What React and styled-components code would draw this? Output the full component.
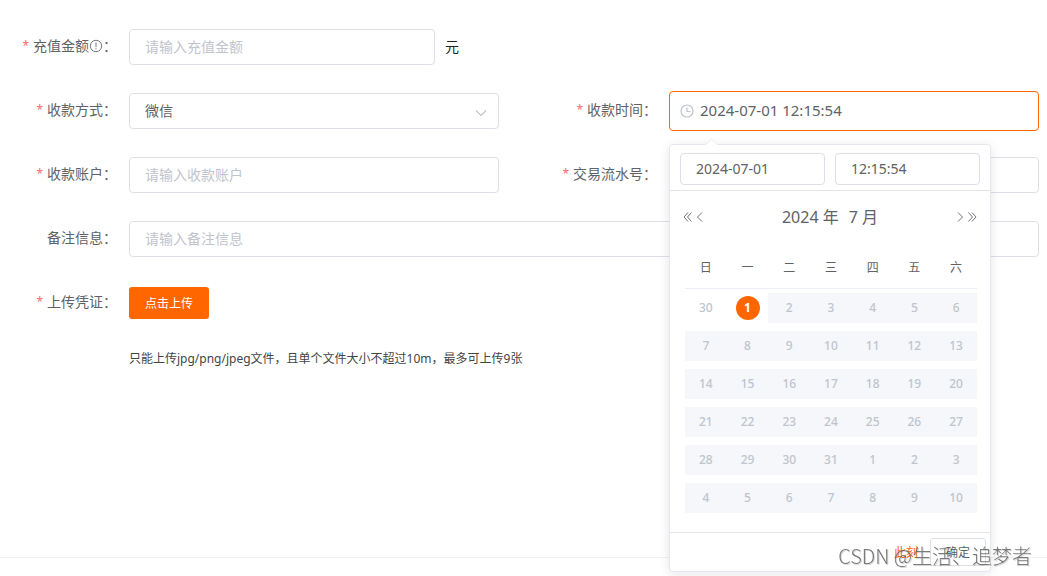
import React from "react";
import styled, { createGlobalStyle } from "styled-components";

const weekDays = ["日", "一", "二", "三", "四", "五", "六"];

// 30 is the last day of June, the last ten cells run into August
const days = [30];
for (let i = 1; i <= 31; i++) days.push(i);
for (let i = 1; i <= 10; i++) days.push(i);

const weeks = [];
for (let i = 0; i < days.length; i += 7) {
  weeks.push(days.slice(i, i + 7));
}

const Arrow = ({ double, right }) => (
  <ArrowSvg viewBox="0 0 12 12" $right={right} aria-hidden="true">
    {double ? (
      <path d="M6 1.500 2 6l4 4.500M9.500 1.500 5.500 6l4 4.500" />
    ) : (
      <path d="M8 1.500 3.500 6 8 10.500" />
    )}
  </ArrowSvg>
);

const FormItem = ({ id, label, required, tip, children }) => (
  <Item>
    <Label htmlFor={id}>
      {required && <Star>*</Star>}
      {label}
      {tip && (
        <TipIcon viewBox="0 0 14 14" aria-hidden="true">
          <circle cx="7" cy="7" r="5.700" />
          <path d="M7 3.500v4.700M7 9.300v1.200" />
        </TipIcon>
      )}
      ：
    </Label>
    <Content>{children}</Content>
  </Item>
);

const DatePanel = () => (
  <Panel>
    <PanelInputs>
      <SmallInput aria-label="选择日期" defaultValue="2024-07-01" />
      <SmallInput aria-label="选择时间" defaultValue="12:15:54" />
    </PanelInputs>
    <PanelHead>
      <NavGroup>
        <IconButton type="button" aria-label="前一年">
          <Arrow double />
        </IconButton>
        <IconButton type="button" aria-label="上个月">
          <Arrow />
        </IconButton>
      </NavGroup>
      <HeadTitle>
        <HeadButton type="button">2024 年</HeadButton>
        <HeadButton type="button">7 月</HeadButton>
      </HeadTitle>
      <NavGroup>
        <IconButton type="button" aria-label="下个月">
          <Arrow right />
        </IconButton>
        <IconButton type="button" aria-label="后一年">
          <Arrow double right />
        </IconButton>
      </NavGroup>
    </PanelHead>
    <Calendar>
      <thead>
        <tr>
          {weekDays.map((day) => (
            <WeekDay key={day}>{day}</WeekDay>
          ))}
        </tr>
      </thead>
      <tbody>
        {weeks.map((week, row) => (
          <tr key={row}>
            {week.map((day, col) => {
              const idx = row * 7 + col;
              return (
                <DayCell key={col}>
                  <Day
                    type="button"
                    $off={idx > 1}
                    $current={idx === 1}
                    disabled={idx > 1}
                  >
                    <span>{day}</span>
                  </Day>
                </DayCell>
              );
            })}
          </tr>
        ))}
      </tbody>
    </Calendar>
    <PanelFoot>
      <TextButton type="button">此刻</TextButton>
      <PlainButton type="button">确定</PlainButton>
    </PanelFoot>
  </Panel>
);

const App = () => {
  return (
    <>
      <GlobalStyle />
      <Form onSubmit={(e) => e.preventDefault()}>
        <Row>
          <FormItem id="amount" label="充值金额" required tip>
            <Input id="amount" placeholder="请输入充值金额" />
            <Unit>元</Unit>
          </FormItem>
        </Row>
        <Row>
          <FormItem id="payway" label="收款方式" required>
            <Select id="payway" defaultValue="wechat">
              <option value="wechat">微信</option>
            </Select>
            <SelectArrow viewBox="0 0 14 14" aria-hidden="true">
              <path d="M2 4.500 7 9.500l5-5" />
            </SelectArrow>
          </FormItem>
          <FormItem id="paytime" label="收款时间" required>
            <DateBox>
              <ClockIcon viewBox="0 0 14 14" aria-hidden="true">
                <circle cx="7" cy="7" r="6" />
                <path d="M7 3.500v4h3.500" />
              </ClockIcon>
              <DateInput id="paytime" defaultValue="2024-07-01 12:15:54" />
            </DateBox>
            <DatePanel />
          </FormItem>
        </Row>
        <Row>
          <FormItem id="account" label="收款账户" required>
            <Input id="account" placeholder="请输入收款账户" />
          </FormItem>
          <FormItem id="serial" label="交易流水号" required>
            <Input id="serial" />
          </FormItem>
        </Row>
        <Row $full>
          <FormItem id="remark" label="备注信息">
            <Input id="remark" placeholder="请输入备注信息" />
          </FormItem>
        </Row>
        <Row $full>
          <FormItem id="upload" label="上传凭证" required>
            <UploadButton id="upload" type="button">
              点击上传
            </UploadButton>
          </FormItem>
        </Row>
        <Hint>只能上传jpg/png/jpeg文件，且单个文件大小不超过10m，最多可上传9张</Hint>
      </Form>
      <Divider />
      <Watermark>CSDN @生活、追梦者</Watermark>
    </>
  );
};

export default App;

const GlobalStyle = createGlobalStyle`
  * {
    box-sizing: border-box;
  }
  body {
    margin: 0;
    min-height: 100vh;
    background: #fff;
  }
  body, input, select, button {
    font-family: "Noto Sans", "Noto Sans CJK SC", sans-serif;
    font-size: 14px;
    color: #606266;
  }
  button {
    padding: 0;
    border: none;
    background: none;
    cursor: pointer;
  }
`;

const Form = styled.form`
  padding: 29px 8px 0 0;
`;

const Row = styled.div`
  display: grid;
  grid-template-columns: ${(props) => (props.$full ? "1fr" : "1fr 1fr")};
  column-gap: 41px;
  margin-bottom: 28px;
`;

const Item = styled.div`
  display: flex;
  height: 36px;
`;

const Label = styled.label`
  display: flex;
  align-items: center;
  justify-content: flex-end;
  flex: none;
  width: 129px;
  padding-right: 12px;
  line-height: 34px;
  height: 34px;
  white-space: nowrap;
`;

const Star = styled.span`
  color: #f56c6c;
  font-size: 12px;
  margin-right: 4px;
`;

const TipIcon = styled.svg`
  width: 14px;
  height: 14px;
  fill: none;
  stroke: #77797d;
`;

const Content = styled.div`
  position: relative;
  display: flex;
  align-items: center;
  flex: 1;
  min-width: 0;
`;

const Input = styled.input`
  flex: 1;
  min-width: 0;
  height: 36px;
  padding: 0 15px 2px;
  border: 1px solid #dcdfe6;
  border-radius: 4px;
  background: #fff;
  outline: none;

  &::placeholder {
    color: #c0c4cc;
  }
`;

const Unit = styled.span`
  width: 64px;
  padding: 0 0 2px 10px;
  color: #222;
`;

const Select = styled.select`
  appearance: none;
  flex: 1;
  height: 36px;
  padding: 0 30px 2px 15px;
  border: 1px solid #dcdfe6;
  border-radius: 4px;
  background: #fff;
  outline: none;
`;

const SelectArrow = styled.svg`
  position: absolute;
  right: 11px;
  top: 13px;
  width: 14px;
  height: 14px;
  fill: none;
  stroke: #c0c4cc;
  stroke-width: 1.2;
  pointer-events: none;
`;

const DateBox = styled.div`
  display: flex;
  align-items: center;
  flex: 1;
  height: 40px;
  margin: -2px 0;
  padding: 0 10px;
  border: 1px solid #ff6600;
  border-radius: 4px;
  background: #fff;
`;

const ClockIcon = styled.svg`
  flex: none;
  width: 14px;
  height: 14px;
  margin-right: 6px;
  fill: none;
  stroke: #c0c4cc;
  stroke-width: 1.2;
`;

const DateInput = styled.input`
  flex: 1;
  min-width: 0;
  height: 36px;
  padding: 0 0 2px;
  border: none;
  outline: none;
  font-size: 15px;
`;

const Panel = styled.div`
  position: absolute;
  top: 51px;
  left: 0;
  z-index: 10;
  width: 322px;
  border: 1px solid #e4e7ed;
  border-radius: 4px;
  background: #fff;
  box-shadow: 0 2px 12px rgba(0, 0, 0, 0.1);

  &::before {
    content: "";
    position: absolute;
    top: -5px;
    left: 37px;
    width: 8px;
    height: 8px;
    border: 1px solid #ebeef5;
    border-width: 1px 0 0 1px;
    background: #fff;
    transform: rotate(45deg);
  }
`;

const PanelInputs = styled.div`
  display: flex;
  gap: 10px;
  padding: 8px 10px 5px;
  border-bottom: 1px solid #e4e4e4;
`;

const SmallInput = styled(Input)`
  height: 32px;
`;

const PanelHead = styled.div`
  display: flex;
  align-items: center;
  justify-content: space-between;
  height: 30px;
  margin: 11px 12px 17px;
`;

const NavGroup = styled.div`
  display: flex;
`;

const IconButton = styled.button`
  display: flex;
  width: 12px;
  height: 12px;
`;

const ArrowSvg = styled.svg`
  width: 12px;
  height: 12px;
  fill: none;
  stroke: #606266;
  stroke-width: 0.9;
  transform: ${(props) => (props.$right ? "scaleX(-1)" : "none")};
`;

const HeadTitle = styled.div`
  display: flex;
  gap: 10px;
`;

const HeadButton = styled.button`
  font-size: 16px;
  line-height: 22px;
`;

const Calendar = styled.table`
  width: 292px;
  margin: 0 13px 15px 15px;
  table-layout: fixed;
  border-collapse: separate;
  border-spacing: 0;
  font-size: 12px;
`;

const WeekDay = styled.th`
  height: 40px;
  padding: 0 0 4px;
  border-bottom: 1px solid #ebeef5;
  font-weight: 400;
`;

const DayCell = styled.td`
  height: 38px;
  padding: 4px 0;
`;

const Day = styled.button`
  display: flex;
  align-items: center;
  justify-content: center;
  width: 100%;
  height: 30px;
  font-size: 12px;
  color: #c0c4cc;
  background: ${(props) => (props.$off ? "#f5f7fa" : "transparent")};

  span {
    width: 24px;
    line-height: 24px;
    border-radius: 50%;
    color: ${(props) => (props.$current ? "#fff" : "inherit")};
    background: ${(props) => (props.$current ? "#ff6600" : "transparent")};
    font-weight: ${(props) => (props.$current ? 700 : 500)};
  }
`;

const PanelFoot = styled.div`
  display: flex;
  align-items: center;
  justify-content: flex-end;
  gap: 12px;
  height: 39px;
  padding: 0 4px;
  border-top: 1px solid #e4e4e4;
`;

const TextButton = styled.button`
  font-size: 12px;
  color: #ff6600;
`;

const PlainButton = styled.button`
  width: 56px;
  height: 28px;
  border: 1px solid #dcdfe6;
  border-radius: 3px;
  font-size: 12px;
`;

const UploadButton = styled.button`
  height: 32px;
  padding: 0 16px;
  border-radius: 3px;
  background: #ff6600;
  color: #fff;
  font-size: 12px;
`;

const Hint = styled.p`
  margin: 0 0 0 129px;
  font-size: 12px;
  line-height: 20px;
  color: #444;
`;

const Divider = styled.hr`
  margin: 188px 0 0;
  border: none;
  border-top: 1px solid #f0f0f0;
`;

const Watermark = styled.div`
  position: fixed;
  right: 15px;
  bottom: 8px;
  z-index: 20;
  font-family: "Noto Sans CJK SC", sans-serif;
  font-size: 20px;
  font-weight: 300;
  line-height: 24px;
  color: rgba(90, 90, 90, 0.8);
  text-shadow: 1px 1px 0 rgba(120, 120, 120, 0.3);
  pointer-events: none;
`;
